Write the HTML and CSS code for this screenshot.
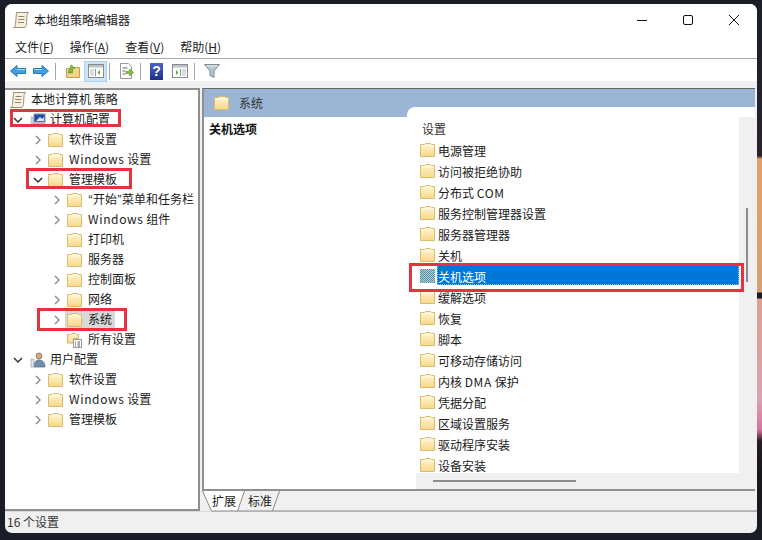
FILE: index.html
```html
<!DOCTYPE html>
<html lang="zh-CN">
<head>
<meta charset="utf-8">
<title>本地组策略编辑器</title>
<link rel="stylesheet" href="styles.css">
</head>
<body>
<svg class="defs" width="0" height="0" aria-hidden="true">
  <defs>
    <linearGradient id="fg" x1="0" y1="0" x2="0" y2="1"><stop offset="0" stop-color="#fff6d2"/><stop offset="1" stop-color="#f8d888"/></linearGradient>
    <pattern id="dither" width="2" height="2" patternUnits="userSpaceOnUse"><rect width="2" height="2" fill="#4f8f9f"/><rect width="1" height="1" fill="#b5d2d8"/><rect x="1" y="1" width="1" height="1" fill="#b5d2d8"/></pattern>
    <symbol id="folder" viewBox="0 0 15 14">
      <path d="M.5 13.500V1.500h4l1-1h5l1 1h3v12z" fill="url(#fg)" stroke="#dcbb70"/>
      <path d="M1.500 3h12" stroke="#fffbe8"/>
    </symbol>
    <symbol id="chevr" viewBox="0 0 8 10"><path d="M2 1l4 4-4 4" fill="none" stroke="#8a8a8a" stroke-width="1.4"/></symbol>
    <symbol id="chevd" viewBox="0 0 10 8"><path d="M1 2l4 4 4-4" fill="none" stroke="#333" stroke-width="1.500"/></symbol>
    <symbol id="scroll" viewBox="0 0 16 16">
      <path d="M3.500.5h12c-1 1-1.500 2-1.500 3l-.5 9c0 1.500-1 3-2.500 3H.5c1.200-.5 2-1.500 2-3z" fill="#f6f0dc" stroke="#9c9278"/>
      <path d="M5.500 4.500h6M5.300 7.500h6M5 10.500h6" stroke="#8b8675"/>
    </symbol>
  </defs>
</svg>
<div class="window">
  <header class="titlebar">
    <svg class="title-icon" width="16" height="16"><use href="#scroll"/></svg>
    <span class="title-text">本地组策略编辑器</span>
    <div class="controls">
      <svg width="12" height="12" viewBox="0 0 12 12"><path d="M1 6.500h10" stroke="#111"/></svg>
      <svg width="12" height="12" viewBox="0 0 12 12"><rect x="1.500" y="1.500" width="9" height="9" rx="1.500" fill="none" stroke="#111"/></svg>
      <svg width="12" height="12" viewBox="0 0 12 12"><path d="M1 1l10 10M11 1L1 11" stroke="#111"/></svg>
    </div>
  </header>
  <nav class="menubar">
    <span>文件(<u>F</u>)</span><span>操作(<u>A</u>)</span><span>查看(<u>V</u>)</span><span>帮助(<u>H</u>)</span>
  </nav>
  <div class="toolbar">
    <svg class="tool" width="16" height="16" viewBox="0 0 16 16"><path d="M.5 8L7 2.500V5.500h8.500v5H7v3z" fill="#3f9fe0" stroke="#2a78b8"/><path d="M7 6.500h8" stroke="#a7dcf8"/></svg>
    <svg class="tool" width="16" height="16" viewBox="0 0 16 16"><path d="M15.500 8L9 2.500V5.500H.5v5H9v3z" fill="#3f9fe0" stroke="#2a78b8"/><path d="M1 6.500h8" stroke="#a7dcf8"/></svg>
    <i class="sep"></i>
    <svg class="tool" width="16" height="16" viewBox="0 0 16 16"><path d="M1.500 14.500V5.500h4l1-1h8v10z" fill="#f4d48a" stroke="#c59e4e"/><path d="M3 10l3-8 4 3-2.500 1v4z" fill="#7cbb3c" stroke="#5a9426" stroke-width=".6"/></svg>
    <span class="tool-active"><svg width="16" height="14" viewBox="0 0 16 14"><rect x=".5" y=".5" width="15" height="13" fill="#fff" stroke="#8a8a8a"/><rect x="1" y="1" width="14" height="2.500" fill="#b8c4cc"/><rect x="2" y="5" width="4" height="7" fill="#d5dde3"/><path d="M7.500 5v7" stroke="#8a9a8a"/><path d="M12 6L9.500 8.500 12 11z" fill="#6aa64e"/></svg></span>
    <i class="sep"></i>
    <svg class="tool doc" width="16" height="16" viewBox="0 0 16 16"><path d="M2.500.5h8l3 3v12h-11z" fill="#fff" stroke="#999"/><path d="M4.500 5h5M4.500 8h3M4.500 11h3" stroke="#666"/><path d="M8 8.500h3.500V6l4 3.500-4 3.500v-2.500H8z" fill="#7cc142" stroke="#5a9426" stroke-width=".6"/></svg>
    <i class="sep"></i>
    <span class="help">?</span>
    <svg class="tool" width="16" height="14" viewBox="0 0 16 14"><rect x=".5" y=".5" width="15" height="13" fill="#fff" stroke="#8a8a8a"/><rect x="1" y="1" width="14" height="2.500" fill="#b8c4cc"/><rect x="10" y="5" width="4" height="7" fill="#d5dde3"/><path d="M8.500 5v7" stroke="#8a9a8a"/><path d="M4 6l2.500 2.500L4 11z" fill="#6aa64e"/></svg>
    <i class="sep"></i>
    <svg class="tool" width="16" height="16" viewBox="0 0 16 16"><path d="M.5 1.500h15L10 8v6.500l-4-2V8z" fill="#b5c6d2" stroke="#7d8e9a"/><path d="M3 3h10" stroke="#eef3f6"/></svg>
  </div>
  <div class="panes">
    <aside class="tree">
      <div class="row root"><svg class="ic16" width="16" height="16"><use href="#scroll"/></svg><span class="label">本地计算机 策略</span></div>
      <div class="row top"><svg class="tw" width="10" height="8"><use href="#chevd"/></svg><svg class="ic16" width="16" height="14" viewBox="0 0 16 14"><rect x="4" y="1" width="11" height="8" fill="#1f4fa8" stroke="#8a94a6"/><path d="M6 8l4-4 2 2 2-2v4z" fill="#dfe8f5"/><path d="M3 10h12v2H1z" fill="#c4cad2" stroke="#8a94a6" stroke-width=".5"/><rect x="1" y="4" width="2" height="9" fill="#d8dde3" stroke="#8a94a6" stroke-width=".5"/></svg><span class="label">计算机配置</span></div>
      <div class="row l1"><svg class="tw" width="8" height="10"><use href="#chevr"/></svg><svg class="fd" width="15" height="14"><use href="#folder"/></svg><span class="label">软件设置</span></div>
      <div class="row l1"><svg class="tw" width="8" height="10"><use href="#chevr"/></svg><svg class="fd" width="15" height="14"><use href="#folder"/></svg><span class="label"><span class="en">Windows</span> 设置</span></div>
      <div class="row l1"><svg class="tw" width="10" height="8"><use href="#chevd"/></svg><svg class="fd" width="15" height="14"><use href="#folder"/></svg><span class="label">管理模板</span></div>
      <div class="row l2"><svg class="tw" width="8" height="10"><use href="#chevr"/></svg><svg class="fd" width="15" height="14"><use href="#folder"/></svg><span class="label"><span class="q">“</span>开始<span class="q">”</span>菜单和任务栏</span></div>
      <div class="row l2"><svg class="tw" width="8" height="10"><use href="#chevr"/></svg><svg class="fd" width="15" height="14"><use href="#folder"/></svg><span class="label"><span class="en">Windows</span> 组件</span></div>
      <div class="row l2"><span class="tw"></span><svg class="fd" width="15" height="14"><use href="#folder"/></svg><span class="label">打印机</span></div>
      <div class="row l2"><span class="tw"></span><svg class="fd" width="15" height="14"><use href="#folder"/></svg><span class="label">服务器</span></div>
      <div class="row l2"><svg class="tw" width="8" height="10"><use href="#chevr"/></svg><svg class="fd" width="15" height="14"><use href="#folder"/></svg><span class="label">控制面板</span></div>
      <div class="row l2"><svg class="tw" width="8" height="10"><use href="#chevr"/></svg><svg class="fd" width="15" height="14"><use href="#folder"/></svg><span class="label">网络</span></div>
      <div class="row l2"><svg class="tw" width="8" height="10"><use href="#chevr"/></svg><span class="sel"><svg class="fd" width="15" height="14"><use href="#folder"/></svg><span class="label">系统</span></span></div>
      <div class="row l2"><span class="tw"></span><svg class="fd" width="15" height="15" viewBox="0 0 15 15"><path d="M.5 10V1.500h3l1-1h4l1 1h2v4h-5v4.500z" fill="url(#fg)" stroke="#d9b25f"/><rect x="6.500" y="6.500" width="8" height="8" fill="#fff" stroke="#999"/><path d="M8 9h1M8 11h1M8 13h1M10.500 9h2.500M10.500 11h2.500M10.500 13h2.500" stroke="#555"/></svg><span class="label">所有设置</span></div>
      <div class="row top"><svg class="tw" width="10" height="8"><use href="#chevd"/></svg><svg class="ic16" width="16" height="16" viewBox="0 0 16 16"><circle cx="9" cy="4" r="3" fill="#d9a87c" stroke="#7a6250" stroke-width=".7"/><path d="M4 15c0-5 2-7 5-7s6 2 6 7z" fill="#6f8fb0" stroke="#4d6a88" stroke-width=".7"/><rect x="1" y="7" width="3" height="8" fill="#dfe4ea" stroke="#8a94a6" stroke-width=".6"/></svg><span class="label">用户配置</span></div>
      <div class="row l1"><svg class="tw" width="8" height="10"><use href="#chevr"/></svg><svg class="fd" width="15" height="14"><use href="#folder"/></svg><span class="label">软件设置</span></div>
      <div class="row l1"><svg class="tw" width="8" height="10"><use href="#chevr"/></svg><svg class="fd" width="15" height="14"><use href="#folder"/></svg><span class="label"><span class="en">Windows</span> 设置</span></div>
      <div class="row l1"><svg class="tw" width="8" height="10"><use href="#chevr"/></svg><svg class="fd" width="15" height="14"><use href="#folder"/></svg><span class="label">管理模板</span></div>
    </aside>
    <section class="detail">
      <div class="detail-box">
        <div class="detail-head"><svg width="15" height="14"><use href="#folder"/></svg><span class="head-text">系统</span></div>
        <div class="detail-body">
          <div class="desc">关机选项</div>
          <div class="list-panel">
            <div class="list-scroll">
              <div class="list-main">
                <div class="list-title">设置</div>
                <div class="item"><svg width="15" height="14"><use href="#folder"/></svg><span>电源管理</span></div>
                <div class="item"><svg width="15" height="14"><use href="#folder"/></svg><span>访问被拒绝协助</span></div>
                <div class="item"><svg width="15" height="14"><use href="#folder"/></svg><span>分布式 <span class="en">COM</span></span></div>
                <div class="item"><svg width="15" height="14"><use href="#folder"/></svg><span>服务控制管理器设置</span></div>
                <div class="item"><svg width="15" height="14"><use href="#folder"/></svg><span>服务器管理器</span></div>
                <div class="item"><svg width="15" height="14"><use href="#folder"/></svg><span>关机</span></div>
                <div class="item selected"><svg width="15" height="14" viewBox="0 0 15 14"><rect width="15" height="14" fill="url(#dither)"/></svg><span class="sel-text">关机选项</span></div>
                <div class="item"><svg width="15" height="14"><use href="#folder"/></svg><span>缓解选项</span></div>
                <div class="item"><svg width="15" height="14"><use href="#folder"/></svg><span>恢复</span></div>
                <div class="item"><svg width="15" height="14"><use href="#folder"/></svg><span>脚本</span></div>
                <div class="item"><svg width="15" height="14"><use href="#folder"/></svg><span>可移动存储访问</span></div>
                <div class="item"><svg width="15" height="14"><use href="#folder"/></svg><span>内核 <span class="en">DMA</span> 保护</span></div>
                <div class="item"><svg width="15" height="14"><use href="#folder"/></svg><span>凭据分配</span></div>
                <div class="item"><svg width="15" height="14"><use href="#folder"/></svg><span>区域设置服务</span></div>
                <div class="item"><svg width="15" height="14"><use href="#folder"/></svg><span>驱动程序安装</span></div>
                <div class="item"><svg width="15" height="14"><use href="#folder"/></svg><span>设备安装</span></div>
              </div>
              <div class="vscroll"><i></i></div>
            </div>
            <div class="hscroll"><i></i></div>
          </div>
        </div>
      </div>
      <div class="tabs">
        <svg class="tab-shape" width="82" height="21" viewBox="0 0 82 21"><path d="M.5 0l9 20h26l7-20z" fill="#fff"/><path d="M.5 0l9 20h26l7-20M35.500 20h35l7-20M70.500 20H560" fill="none" stroke="#8a8a8a"/></svg>
        <span class="tab">扩展</span><span class="tab">标准</span>
      </div>
    </section>
  </div>
  <footer class="status">16 个设置</footer>
  <i class="mark mark-1"></i>
  <i class="mark mark-2"></i>
  <i class="mark mark-3"></i>
  <i class="mark mark-4"></i>
</div>
</body>
</html>
```
FILE: styles.css
```css
* { box-sizing: border-box; }
html, body { margin: 0; height: 100%; overflow: hidden; }
body {
  width: 762px; height: 540px;
  padding: 4px 5px;
  background: #1a1c26 linear-gradient(180deg, #1b1e2b 0, #2a2230 156px, #e59f68 159px, #d9a070 292px, #1a1a22 293px, #1a1a22 298px, #dfa08e 299px, #dca0b0 400px, #d9709f 430px, #2a1a26 441px, #17161e 470px, #1a1c26 540px) right top / 5px 100% no-repeat;
  font-family: "Noto Sans CJK SC", "Noto Sans", sans-serif;
  font-size: 12px;
  color: #1a1a1a;
}
.defs { position: absolute; }
.window {
  position: relative;
  width: 752px; height: 529px;
  background: #f0f0f0;
  border-radius: 7px;
  overflow: hidden;
  display: flex; flex-direction: column;
}
.titlebar {
  flex: none; height: 35px;
  background: #fff;
  display: flex; align-items: center;
  padding: 0 0 4px 8px;
}
.title-text { margin-left: 5px; }
.controls { margin-left: auto; display: flex; gap: 34px; padding-right: 17px; }
.controls svg { display: block; }
.menubar {
  flex: none; height: 20px;
  background: #fff;
  border-bottom: 1px solid #aaa;
  display: flex; gap: 16px;
  padding-left: 10px;
  line-height: 16px;
  color: #222;
}
.menubar span { white-space: nowrap; }
.toolbar {
  flex: none; height: 22px;
  background: #fff;
  display: flex; align-items: center;
  padding: 2px 0 0 5px;
}
.tool { flex: none; display: block; }
.tool + .tool { margin-left: 7px; }
.doc { margin-left: -1px; }
.sep { flex: none; width: 1px; height: 17px; background: #a5a5a5; margin: 0 9px 0 6px; }
.tool-active {
  flex: none; width: 23px; height: 21px; margin: 0 -4px 0 3px;
  background: #cde6f7; border: 1px solid #a9d2ee;
  display: flex; align-items: center; justify-content: center;
}
.help {
  flex: none; width: 13px; height: 17px; margin-right: 9px;
  background: linear-gradient(180deg, #4a64c8, #1e2f8a);
  color: #fff; font: bold 14px/17px "Liberation Sans", sans-serif;
  text-align: center;
}
.panes {
  flex: none; height: 423px; margin-top: 7px;
  display: flex; gap: 2px;
}
.tree {
  flex: none; width: 195px;
  background: #fff;
  border: solid #8f8f8f;
  border-width: 2px 2px 2px 0;
  overflow: hidden;
}
.row { height: 20px; display: flex; align-items: center; white-space: nowrap; }
.row.root { padding-left: 0; }
.row.top { padding-left: 8px; }
.row.l1 { padding-left: 28px; }
.row.l2 { padding-left: 47px; }
.tw { flex: none; width: 10px; display: block; }
.ic16 { flex: none; margin-left: 5px; display: block; }
.top .ic16 { margin-left: 7px; }
.fd { flex: none; margin-left: 5px; display: block; }
.label { margin-left: 6px; padding-bottom: 4px; }
.root .label { margin-left: 5px; }
.top .label { margin-left: 4px; }
.en { letter-spacing: .65px; }
.q { font-family: "Liberation Sans", sans-serif; padding: 0 .5px; }
.sel { display: flex; align-items: center; background: #d9d9d9; height: 18px; margin-left: 3px; padding: 0 3px 0 2px; }
.sel .fd { margin-left: 0; }
.detail { flex: 1; min-width: 0; display: flex; flex-direction: column; }
.detail-box {
  flex: 1; min-height: 0;
  background: #fff;
  border-top: 1px solid #666;
  border-left: 2px solid #8f8f8f;
  border-bottom: 2px solid #8f8f8f;
  display: flex; flex-direction: column;
  margin-right: 2px;
}
.detail-head {
  flex: none; height: 28px;
  background: #9ab6d4;
  display: flex; align-items: flex-start; gap: 10px;
  padding: 7px 0 0 10px;
  color: #333;
}
.head-text { line-height: 14px; }
.detail-body { flex: 1; min-height: 0; display: flex; }
.desc { width: 203px; flex: none; padding: 3px 0 0 5px; font-weight: 700; color: #111; }
.list-panel {
  flex: 1; min-width: 0;
  margin-top: -10px;
  background: #fff;
  border-top-left-radius: 8px;
  display: flex; flex-direction: column;
  overflow: hidden;
}
.list-scroll { flex: 1; min-height: 0; display: flex; }
.list-main { flex: 1; min-width: 0; padding: 10px 0 0 13px; overflow: hidden; }
.list-title { height: 21px; line-height: 24px; padding-left: 2px; color: #333; }
.item { height: 21px; display: flex; align-items: center; gap: 2px; padding-top: 3px; white-space: nowrap; }
.item svg { flex: none; display: block; }
.item > span { padding: 0 1px; line-height: 17px; }
.item > .sel-text {
  flex: 1; height: 21px; margin: -3px 0 0 0; padding-top: 4px;
  background: #0078d7; color: #fff;
  outline: 1px dotted #8fc1e8; outline-offset: -1px;
}
.vscroll { flex: none; width: 16px; margin-top: 10px; position: relative; background: #f0f0f0; }
.vscroll i { position: absolute; left: 7px; top: 91px; width: 2px; height: 74px; background: #8c8c8c; }
.hscroll { flex: none; height: 16px; margin-left: 9px; position: relative; background: #f0f0f0; }
.hscroll i { position: absolute; left: 17px; top: 7px; width: 143px; height: 2px; background: #8c8c8c; }
.tabs { flex: none; height: 20px; display: flex; padding-left: 10px; margin-right: 2px; position: relative; }
.tab-shape { position: absolute; left: 0; top: 0; overflow: visible; }
.tab { position: relative; width: 36px; line-height: 19px; }
.status {
  flex: 1; min-height: 0;
  border-top: 1px solid #dcdcdc;
  padding: 1px 0 0 2px;
  color: #333;
}
.mark { position: absolute; border: 3px solid #e6323f; pointer-events: none; display: block; }
.mark-1 { left: 5px; top: 105px; width: 111px; height: 18px; }
.mark-2 { left: 21px; top: 164px; width: 106px; height: 21px; }
.mark-3 { left: 32px; top: 304px; width: 90px; height: 23px; }
.mark-4 { left: 404px; top: 259px; width: 335px; height: 29px; }
```
